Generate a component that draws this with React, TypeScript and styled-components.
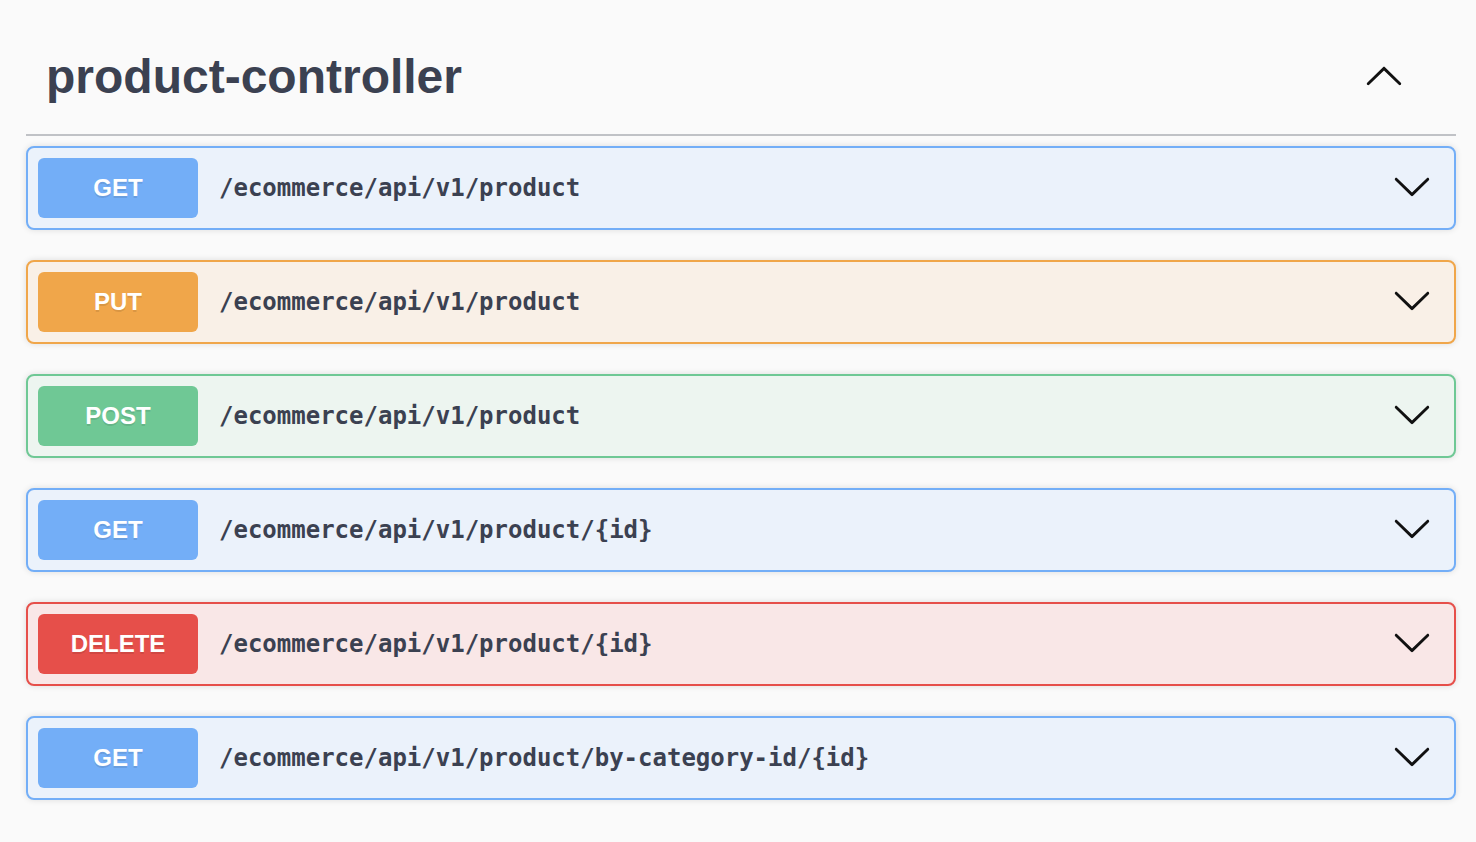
import React from "react";
import styled, { createGlobalStyle } from "styled-components";

const GlobalStyle = createGlobalStyle`
  html, body {
    margin: 0;
    padding: 0;
    background: #fafafa;
  }
  body {
    font-family: "Liberation Sans", Arial, sans-serif;
  }
`;

type Method = "GET" | "PUT" | "POST" | "DELETE";

// Couleurs par méthode HTTP : badge / bordure, fond du bloc
const palette: Record<Method, { main: string; bg: string }> = {
  GET: { main: "#73aef7", bg: "#ebf2fb" },
  PUT: { main: "#f0a64a", bg: "#f9f0e7" },
  POST: { main: "#6fc895", bg: "#edf5f0" },
  DELETE: { main: "#e64f4a", bg: "#f9e7e7" },
};

const Page = styled.div`
  padding: 30px 20px 40px 26px;
`;

const Section = styled.section`
  display: flex;
  flex-direction: column;
`;

const TagHeader = styled.div`
  display: flex;
  align-items: center;
  justify-content: space-between;
  padding: 20px 52px 30px 20px;
  border-bottom: 2px solid rgba(59, 65, 81, 0.3);
  margin-bottom: 10px;
`;

const TagTitle = styled.h3`
  margin: 0;
  font-family: "Liberation Sans", Arial, sans-serif;
  font-size: 48px;
  line-height: 54px;
  font-weight: 700;
  color: #3b4151;
`;

const ArrowButton = styled.button<{ $lift?: number }>`
  display: flex;
  align-items: center;
  justify-content: center;
  padding: 0;
  margin-bottom: ${({ $lift }) => ($lift ? $lift * 2 : 0)}px;
  border: none;
  background: none;
  cursor: pointer;
`;

const Arrow = styled.svg<{ $up?: boolean }>`
  width: 40px;
  height: 40px;
  fill: #111;
  transform: ${({ $up }) => ($up ? "rotate(180deg)" : "none")};
`;

const OpList = styled.div`
  display: flex;
  flex-direction: column;
  gap: 30px;
`;

const OpBlock = styled.div<{ $method: Method }>`
  display: flex;
  align-items: center;
  height: 84px;
  box-sizing: border-box;
  padding: 0 22px 0 10px;
  border: 2px solid ${({ $method }) => palette[$method].main};
  border-radius: 8px;
  background: ${({ $method }) => palette[$method].bg};
  box-shadow: 0 0 6px rgba(0, 0, 0, 0.12);
  cursor: pointer;
`;

const MethodBadge = styled.span<{ $method: Method }>`
  display: flex;
  align-items: center;
  justify-content: center;
  flex: none;
  width: 160px;
  height: 60px;
  border-radius: 6px;
  background: ${({ $method }) => palette[$method].main};
  color: #fff;
  font-family: "Liberation Sans", Arial, sans-serif;
  font-size: 24px;
  font-weight: 700;
  text-shadow: 0 2px 0 rgba(0, 0, 0, 0.1);
`;

const Path = styled.span`
  flex: 1;
  padding: 0 21px;
  margin-bottom: 1px;
  font-family: "DejaVu Sans Mono", "Liberation Mono", monospace;
  font-size: 24px;
  font-weight: 700;
  color: #3b4151;
`;

const arrowPath =
  "M17.418 6.109c.272-.268.709-.268.979 0s.271.701 0 .969l-7.908 7.83c-.27.268-.707.268-.979 0l-7.908-7.83c-.27-.268-.27-.701 0-.969.271-.268.709-.268.979 0L10 13.25l7.418-7.141z";

const ChevronIcon: React.FC<{ up?: boolean }> = ({ up }) => (
  <Arrow $up={up} viewBox="0 0 20 20" aria-hidden="true">
    <path d={arrowPath} />
  </Arrow>
);

const operations: { method: Method; path: string }[] = [
  { method: "GET", path: "/ecommerce/api/v1/product" },
  { method: "PUT", path: "/ecommerce/api/v1/product" },
  { method: "POST", path: "/ecommerce/api/v1/product" },
  { method: "GET", path: "/ecommerce/api/v1/product/{id}" },
  { method: "DELETE", path: "/ecommerce/api/v1/product/{id}" },
  { method: "GET", path: "/ecommerce/api/v1/product/by-category-id/{id}" },
];

const App: React.FC = () => (
  <>
    <GlobalStyle />
    <Page>
      <Section>
        <TagHeader>
          <TagTitle>product-controller</TagTitle>
          <ArrowButton aria-label="Collapse operation">
            <ChevronIcon up />
          </ArrowButton>
        </TagHeader>
        <OpList>
          {operations.map((op, i) => (
            <OpBlock key={i} $method={op.method}>
              <MethodBadge $method={op.method}>{op.method}</MethodBadge>
              <Path>{op.path}</Path>
              <ArrowButton $lift={2} aria-label="Expand operation">
                <ChevronIcon />
              </ArrowButton>
            </OpBlock>
          ))}
        </OpList>
      </Section>
    </Page>
  </>
);

export default App;
